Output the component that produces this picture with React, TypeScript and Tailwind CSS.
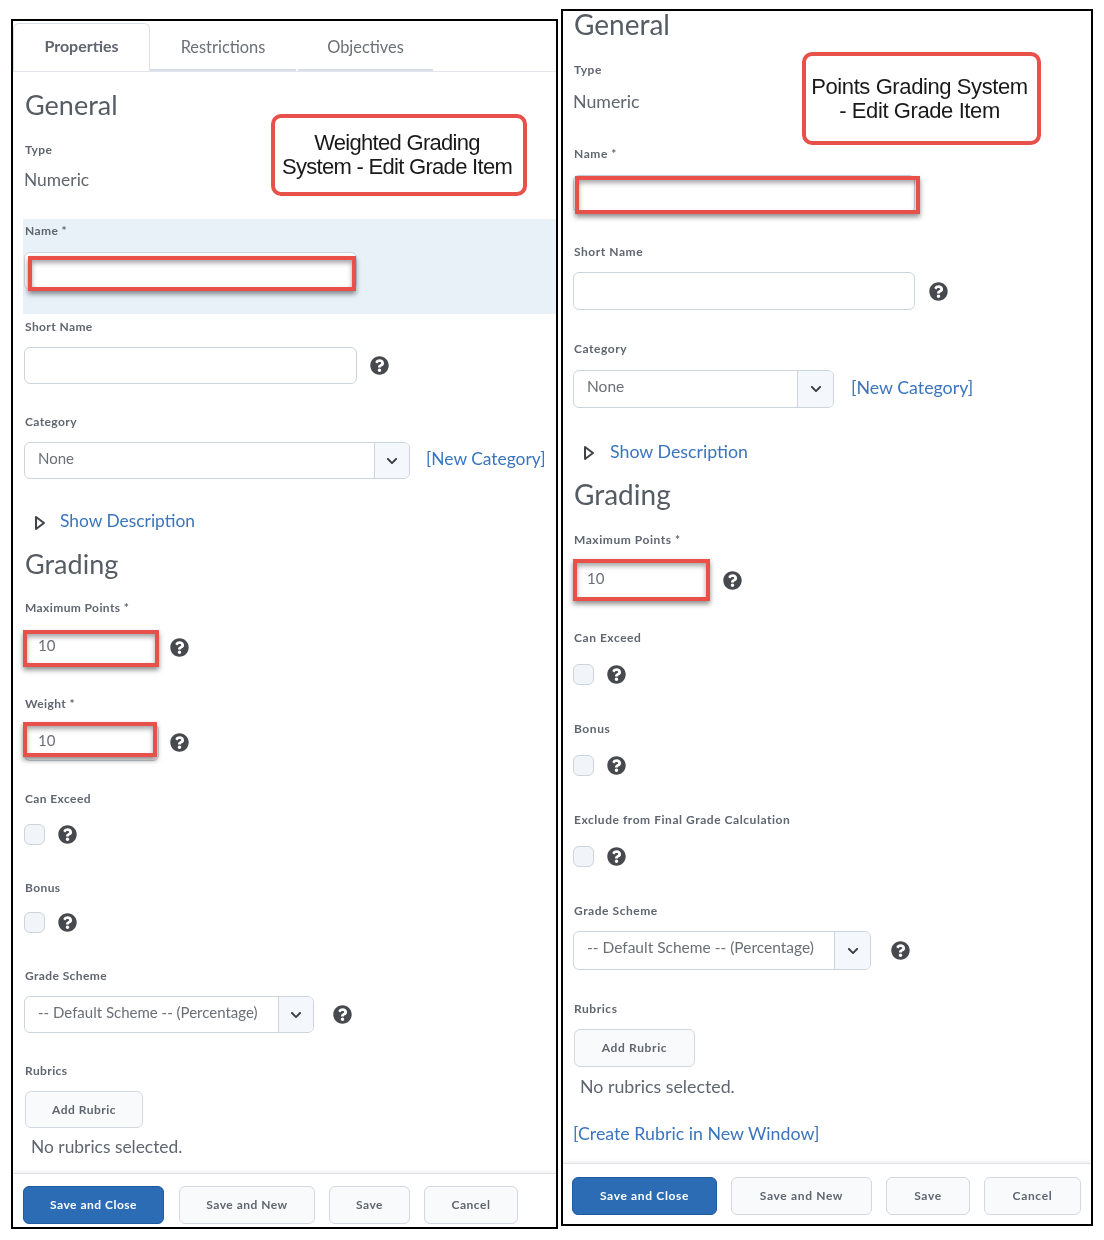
import type { ReactNode } from "react";
import { FaChevronDown, FaQuestionCircle } from "react-icons/fa";

// "wide" marks the right screenshot, which was pasted at a slightly larger scale.
type BoxProps = { className?: string; children?: ReactNode; wide?: boolean };

const FieldLabel = ({ className = "", children, wide }: BoxProps) => (
  <div
    className={`ml-px h-4 text-[12px] leading-[17px] font-bold text-[#5f6670] ${
      wide ? "tracking-[0.55px]" : "tracking-[0.4px]"
    } ${className}`}
  >
    {children}
  </div>
);

const Heading = ({ className = "", children, wide }: BoxProps) => (
  <h2 className={`ml-px h-[34px] leading-[34px] text-[#565c64] ${wide ? "text-[28px]" : "text-[27px]"} ${className}`}>
    {children}
  </h2>
);

const BodyText = ({ className = "", children, wide }: BoxProps) => (
  <div className={`h-6 leading-6 text-[#5f6670] ${wide ? "text-[17.8px]" : "text-[17.4px]"} ${className}`}>
    {children}
  </div>
);

const Help = ({ className = "" }: { className?: string }) => (
  <FaQuestionCircle size={19} className={`shrink-0 text-[#46494d] ${className}`} />
);

const TextBox = ({ className = "", value = "" }: { className?: string; value?: string }) => (
  <input
    readOnly
    value={value}
    className={`block h-full w-full rounded-md border border-[#cdd5dc] bg-white pl-[13px] text-[15px] text-[#6a7077] outline-none ${className}`}
  />
);

// Red annotation drawn over a field, offset through its own classes.
const RedMark = ({ className = "" }: { className?: string }) => (
  <div
    className={`pointer-events-none absolute border-[4px] border-[#e8504a] shadow-[0_3px_5px_rgba(0,0,0,0.45),inset_0_3px_5px_rgba(0,0,0,0.35)] ${className}`}
  />
);

const Callout = ({ className = "", children }: BoxProps) => (
  <div
    className={`absolute flex items-center justify-center rounded-[10px] border-[4px] border-[#e8504a] bg-white pr-[4px] text-center font-['Liberation_Sans',sans-serif] text-[22px] leading-6 text-[#1a1a1a] ${className}`}
  >
    <div>{children}</div>
  </div>
);

const SelectBox = ({ className = "", text, arrow, wide }: { className?: string; text: string; arrow: string; wide?: boolean }) => (
  <div className={`flex shrink-0 items-stretch overflow-hidden rounded-md border border-[#cdd5dc] bg-white ${className}`}>
    <div className={`flex-1 pl-[13px] leading-[30px] whitespace-nowrap text-[#6a7077] ${wide ? "text-[15.5px]" : "text-[15px]"}`}>
      {text}
    </div>
    <div className={`flex items-center justify-center border-l border-[#cdd5dc] bg-[#f4f7fb] text-[#3c4045] ${arrow}`}>
      <FaChevronDown size={12} />
    </div>
  </div>
);

const CheckRow = ({ className = "" }: { className?: string }) => (
  <div className={`flex h-[21px] items-center gap-[13px] ${className}`}>
    <input
      type="checkbox"
      readOnly
      className="h-[21px] w-[21px] appearance-none rounded-md border border-[#cdd5dc] bg-[#f1f4f9]"
    />
    <Help />
  </div>
);

const Disclosure = ({ className = "", wide }: BoxProps) => (
  <div className={`flex h-6 items-center leading-6 text-[#3a75bd] ${wide ? "text-[17.8px]" : "text-[17.4px]"} ${className}`}>
    <svg
      width="12"
      height="16"
      viewBox="0 0 12 16"
      className={`mt-[3px] ml-[10px] shrink-0 ${wide ? "mr-[15px]" : "mr-[14px]"}`}
    >
      <path d="M2 2 L10 8 L2 14 Z" fill="none" stroke="#3f4347" strokeWidth="2" strokeLinejoin="round" />
    </svg>
    Show Description
  </div>
);

const Button = ({ className = "", children, primary, wide }: BoxProps & { primary?: boolean }) => (
  <button
    className={`flex items-center justify-center rounded-md border text-[12px] font-bold ${
      wide ? "tracking-[0.65px]" : "tracking-[0.5px]"
    } ${
      primary
        ? "border-[#205a9e] bg-[#2c6cb5] text-white"
        : "border-[#d3d9e3] bg-[#f9fafc] text-[#5f6670]"
    } ${className}`}
  >
    {children}
  </button>
);

const Tab = ({ className = "", children }: BoxProps) => (
  <div className={`flex h-[47px] items-center justify-center border-b-2 border-[#d9dfe8] pt-[2px] text-[16.4px] text-[#6a7077] ${className}`}>
    {children}
  </div>
);

const WeightedPanel = () => (
  <section className="relative mt-[19px] flex h-[1210px] w-[547px] shrink-0 flex-col border-2 border-black">
    <Callout className="top-[93px] left-[258px] h-[82px] w-[256px] tracking-[-0.7px]">
      Weighted Grading
      <br />
      System - Edit Grade Item
    </Callout>

    <div className="flex h-[51px] items-end border-b border-[#e2e6ec]">
      <div className="flex h-[48px] w-[137px] items-center justify-center rounded-t-md border-x border-t border-[#d9dfe8] pb-[3px] text-[16px] font-bold text-[#5f6670]">
        Properties
      </div>
      <Tab className="w-[146px]">Restrictions</Tab>
      <Tab className="ml-[2px] w-[135px]">Objectives</Tab>
    </div>

    <div className="flex flex-1 flex-col">
      <div className="px-[11px]">
        <Heading className="mt-[16px]">General</Heading>
        <FieldLabel className="mt-[19px]">Type</FieldLabel>
        <BodyText className="mt-[11px]">Numeric</BodyText>
      </div>

      <div className="mt-[27px] ml-[10px] h-[95px] bg-[#e8f0f8] pt-[3px] pl-px">
        <FieldLabel>Name *</FieldLabel>
        <div className="relative mt-[14px] h-[38px] w-[333px]">
          <TextBox />
          <RedMark className="top-[4px] left-[4px] h-[35px] w-[328px]" />
        </div>
      </div>

      <div className="px-[11px]">
        <FieldLabel className="mt-[4px]">Short Name</FieldLabel>
        <div className="mt-[13px] flex h-[37px] items-center gap-[13px]">
          <div className="h-full w-[333px]">
            <TextBox />
          </div>
          <Help />
        </div>

        <FieldLabel className="mt-[29px]">Category</FieldLabel>
        <div className="mt-[13px] flex h-[37px] items-center gap-[16px]">
          <SelectBox className="h-full w-[386px]" text="None" arrow="w-[35px]" />
          <span className="-mt-[2px] text-[17.4px] whitespace-nowrap text-[#3a75bd]">[New Category]</span>
        </div>

        <Disclosure className="mt-[30px]" />
        <Heading className="mt-[14px]">Grading</Heading>

        <FieldLabel className="mt-[18px]">Maximum Points *</FieldLabel>
        <div className="mt-[15px] flex h-[37px] items-center gap-[11px]">
          <div className="relative h-full w-[135px]">
            <TextBox value="10" className="pb-[7px]" />
            <RedMark className="top-0 -left-px h-[37px] w-[136px]" />
          </div>
          <Help className="-mt-[2px]" />
        </div>

        <FieldLabel className="mt-[28px]">Weight *</FieldLabel>
        <div className="mt-[13px] flex h-[37px] items-center gap-[11px]">
          <div className="relative h-full w-[135px]">
            <TextBox value="10" className="pb-[6px]" />
            <RedMark className="-top-[2px] -left-px h-[35px] w-[134px]" />
          </div>
          <Help />
        </div>

        <FieldLabel className="mt-[29px]">Can Exceed</FieldLabel>
        <CheckRow className="mt-[18px]" />

        <FieldLabel className="mt-[34px]">Bonus</FieldLabel>
        <CheckRow className="mt-[17px]" />

        <FieldLabel className="mt-[34px]">Grade Scheme</FieldLabel>
        <div className="mt-[13px] flex h-[37px] items-center gap-[19px]">
          <SelectBox className="h-full w-[290px]" text="-- Default Scheme -- (Percentage)" arrow="w-[35px]" />
          <Help />
        </div>

        <FieldLabel className="mt-[29px]">Rubrics</FieldLabel>
        <Button className="mt-[13px] ml-px h-[37px] w-[118px]">Add Rubric</Button>
        <BodyText className="mt-[7px] ml-[7px]">No rubrics selected.</BodyText>
      </div>

      <div className="mt-[14px] flex h-[54px] items-start border-t border-[#dfe2e6] pt-[12px] pl-[10px] shadow-[0_-2px_3px_rgba(0,0,0,0.06)]">
        <Button primary className="h-[38px] w-[141px]">Save and Close</Button>
        <Button className="ml-[15px] h-[38px] w-[136px]">Save and New</Button>
        <Button className="ml-[14px] h-[38px] w-[81px]">Save</Button>
        <Button className="ml-[14px] h-[38px] w-[94px]">Cancel</Button>
      </div>
    </div>
  </section>
);

const PointsPanel = () => (
  <section className="relative mt-[9px] flex h-[1217px] w-[532px] shrink-0 flex-col border-2 border-black">
    <Callout className="top-[41px] left-[239px] h-[93px] w-[239px] tracking-[-0.4px]">
      Points Grading System
      <br />- Edit Grade Item
    </Callout>

    <div className="px-[10px]">
      <Heading wide className="-mt-[4px]">General</Heading>
      <FieldLabel wide className="mt-[20px]">Type</FieldLabel>
      <BodyText wide className="mt-[12px]">Numeric</BodyText>

      <FieldLabel wide className="mt-[32px]">Name *</FieldLabel>
      <div className="relative mt-[14px] h-[38px] w-[342px]">
        <TextBox />
        <RedMark className="top-px left-[2px] h-[38px] w-[345px]" />
      </div>

      <FieldLabel wide className="mt-[30px]">Short Name</FieldLabel>
      <div className="mt-[13px] flex h-[38px] items-center gap-[14px]">
        <div className="h-full w-[342px]">
          <TextBox />
        </div>
        <Help />
      </div>

      <FieldLabel wide className="mt-[30px]">Category</FieldLabel>
      <div className="mt-[14px] flex h-[38px] items-center gap-[17px]">
        <SelectBox wide className="h-full w-[261px]" text="None" arrow="w-[36px]" />
        <span className="-mt-[4px] text-[17.8px] whitespace-nowrap text-[#3a75bd]">[New Category]</span>
      </div>

      <Disclosure wide className="mt-[31px]" />
      <Heading wide className="mt-[14px]">Grading</Heading>

      <FieldLabel wide className="mt-[20px]">Maximum Points *</FieldLabel>
      <div className="mt-[12px] flex h-[42px] items-center gap-[13px]">
        <div className="relative h-full w-[137px]">
          <TextBox value="10" className="pb-1" />
          <RedMark className="inset-0" />
        </div>
        <Help />
      </div>

      <FieldLabel wide className="mt-[28px]">Can Exceed</FieldLabel>
      <CheckRow className="mt-[19px]" />

      <FieldLabel wide className="mt-[35px]">Bonus</FieldLabel>
      <CheckRow className="mt-[19px]" />

      <FieldLabel wide className="mt-[35px]">Exclude from Final Grade Calculation</FieldLabel>
      <CheckRow className="mt-[19px]" />

      <FieldLabel wide className="mt-[35px]">Grade Scheme</FieldLabel>
      <div className="mt-[13px] flex h-[39px] items-center gap-[20px]">
        <SelectBox wide className="h-full w-[298px]" text="-- Default Scheme -- (Percentage)" arrow="w-[36px]" />
        <Help />
      </div>

      <FieldLabel wide className="mt-[30px]">Rubrics</FieldLabel>
      <Button wide className="mt-[13px] ml-px h-[38px] w-[121px]">Add Rubric</Button>
      <BodyText wide className="mt-[7px] ml-[7px]">No rubrics selected.</BodyText>
      <div className="mt-[23px] h-6 text-[17.8px] leading-6 text-[#3a75bd]">[Create Rubric in New Window]</div>
    </div>

    <div className="mt-[18px] flex h-[61px] items-start border-t border-[#dfe2e6] pt-[13px] pl-[9px] shadow-[0_-2px_3px_rgba(0,0,0,0.06)]">
      <Button wide primary className="h-[38px] w-[145px]">Save and Close</Button>
      <Button wide className="ml-[14px] h-[38px] w-[141px]">Save and New</Button>
      <Button wide className="ml-[14px] h-[38px] w-[84px]">Save</Button>
      <Button wide className="ml-[14px] h-[38px] w-[97px]">Cancel</Button>
    </div>
  </section>
);

const App = () => (
  <div className="flex min-h-[1240px] w-[1104px] items-start gap-[3px] bg-white pl-[11px] font-[Lato,sans-serif] blur-[0.6px]">
    <WeightedPanel />
    <PointsPanel />
  </div>
);

export default App;
